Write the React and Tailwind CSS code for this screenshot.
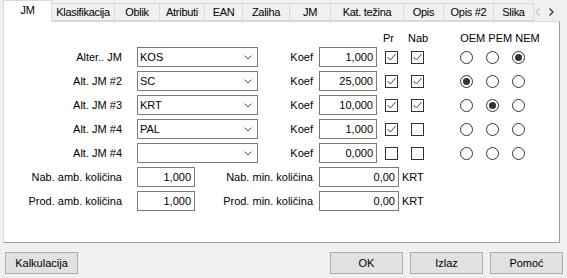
import React from 'react';

const tabs = [
  { label: 'JM', w: 'w-[49px]', active: true },
  { label: 'Klasifikacija', w: 'w-[63px]' },
  { label: 'Oblik', w: 'w-[45px]' },
  { label: 'Atributi', w: 'w-[45px]' },
  { label: 'EAN', w: 'w-[38px]' },
  { label: 'Zaliha', w: 'w-[47px]' },
  { label: 'JM', w: 'w-[41px]' },
  { label: 'Kat. težina', w: 'w-[73px]' },
  { label: 'Opis', w: 'w-[40px]' },
  { label: 'Opis #2', w: 'w-[50px]' },
  { label: 'Slika', w: 'w-[40px]' },
];

const rows = [
  { label: 'Alter.. JM', value: 'KOS', koef: '1,000', pr: true, nab: true, sel: 2 },
  { label: 'Alt. JM #2', value: 'SC', koef: '25,000', pr: true, nab: true, sel: 0 },
  { label: 'Alt. JM #3', value: 'KRT', koef: '10,000', pr: true, nab: true, sel: 1 },
  { label: 'Alt. JM #4', value: 'PAL', koef: '1,000', pr: true, nab: false, sel: -1 },
  { label: 'Alt. JM #4', value: '', koef: '0,000', pr: false, nab: false, sel: -1 },
];

function Check({ on }) {
  return (
    <div className="w-[13px] h-[13px] border border-[#333333] bg-white flex items-center justify-center">
      {on && (
        <svg width="9" height="8" viewBox="0 0 9 8">
          <polyline points="0.5,4 3.5,7 8.5,1" fill="none" stroke="#444444" strokeWidth="1" />
        </svg>
      )}
    </div>
  );
}

function Radio({ on }) {
  return (
    <div className="w-[13px] h-[13px] rounded-full border border-[#333333] bg-white flex items-center justify-center">
      {on && <div className="w-[7px] h-[7px] rounded-full bg-[#333333]" />}
    </div>
  );
}

function Combo({ value }) {
  return (
    <div className="w-[121px] h-[20px] border border-[#7a7a7a] bg-white flex items-center pl-[2px] pr-[5px]">
      <span className="flex-1">{value}</span>
      <svg width="8" height="5" viewBox="0 0 8 5">
        <polyline points="0.5,0.5 4,4 7.5,0.5" fill="none" stroke="#555555" strokeWidth="1" />
      </svg>
    </div>
  );
}

function Field({ value, w }) {
  return (
    <div className={`${w} h-[20px] border border-[#7a7a7a] bg-white flex items-center justify-end pr-[3px]`}>
      {value}
    </div>
  );
}

function Button({ children }) {
  return (
    <button className="w-[73px] h-[22px] bg-[#e1e1e1] border border-[#adadad] flex items-center justify-center text-black">
      {children}
    </button>
  );
}

export default function App() {
  return (
    <div className="w-[567px] h-[278px] bg-[#f0f0f0] font-['Liberation_Sans',Arial,sans-serif] text-[11px] text-black leading-none overflow-hidden">
      {/* tab strip */}
      <div className="flex items-end h-[22px] pl-[3px] relative z-10 tracking-[-0.3px]">
        {tabs.map((t, i) =>
          t.active ? (
            <div
              key={i}
              className={`${t.w} h-[22px] bg-white border border-b-0 border-[#d9d9d9] flex items-center justify-center pb-[2px]`}
            >
              {t.label}
            </div>
          ) : (
            <div
              key={i}
              className={`${t.w} h-[18px] mb-[1px] bg-[#f0f0f0] border border-l-0 border-[#d9d9d9] flex items-center justify-center whitespace-nowrap`}
            >
              {t.label}
            </div>
          )
        )}
        <div className="flex-1 h-[18px] mb-[1px] flex items-center gap-[9px] pl-[1px]">
          <svg width="5" height="8" viewBox="0 0 5 8">
            <polyline points="4.5,0.5 1,4 4.5,7.5" fill="none" stroke="#c4c4c4" strokeWidth="1.3" />
          </svg>
          <svg width="5" height="8" viewBox="0 0 5 8">
            <polyline points="0.5,0.5 4,4 0.5,7.5" fill="none" stroke="#333333" strokeWidth="1.3" />
          </svg>
        </div>
      </div>

      {/* panel */}
      <div className="ml-[3px] w-[557px] h-[222px] -mt-px bg-white border border-[#d9d9d9] border-b-[#a0a0a0] border-r-[#a0a0a0] pt-[8px]">
        {/* header */}
        <div className="flex h-[16px] items-center">
          <span className="ml-[379px]">Pr</span>
          <span className="ml-[14px]">Nab</span>
          <span className="ml-[32px] whitespace-pre">OEM PEM NEM</span>
        </div>
        <div className="mt-[1px] flex flex-col gap-[4px]">
          {rows.map((r, i) => (
            <div key={i} className="flex items-center h-[20px]">
              <div className="w-[118px] text-right">{r.label}</div>
              <div className="ml-[15px]">
                <Combo value={r.value} />
              </div>
              <div className="w-[55px] text-right">Koef</div>
              <div className="ml-[6px]">
                <Field value={r.koef} w="w-[58px]" />
              </div>
              <div className="ml-[8px]">
                <Check on={r.pr} />
              </div>
              <div className="ml-[13px]">
                <Check on={r.nab} />
              </div>
              <div className="ml-[36px] flex gap-[13px]">
                <Radio on={r.sel === 0} />
                <Radio on={r.sel === 1} />
                <Radio on={r.sel === 2} />
              </div>
            </div>
          ))}
          <div className="flex items-center h-[20px]">
            <div className="w-[118px] text-right">Nab. amb. količina</div>
            <div className="ml-[15px]">
              <Field value="1,000" w="w-[58px]" />
            </div>
            <div className="w-[118px] text-right">Nab. min. količina</div>
            <div className="ml-[6px]">
              <Field value="0,00" w="w-[80px]" />
            </div>
            <span className="ml-[3px]">KRT</span>
          </div>
          <div className="flex items-center h-[20px]">
            <div className="w-[118px] text-right">Prod. amb. količina</div>
            <div className="ml-[15px]">
              <Field value="1,000" w="w-[58px]" />
            </div>
            <div className="w-[118px] text-right">Prod. min. količina</div>
            <div className="ml-[6px]">
              <Field value="0,00" w="w-[80px]" />
            </div>
            <span className="ml-[3px]">KRT</span>
          </div>
        </div>
      </div>

      {/* buttons */}
      <div className="flex items-center mt-[9px] pl-[5px] pr-[4px]">
        <Button>Kalkulacija</Button>
        <div className="flex-1" />
        <div className="flex gap-[7px]">
          <Button>OK</Button>
          <Button>Izlaz</Button>
          <Button>Pomoć</Button>
        </div>
      </div>
    </div>
  );
}
